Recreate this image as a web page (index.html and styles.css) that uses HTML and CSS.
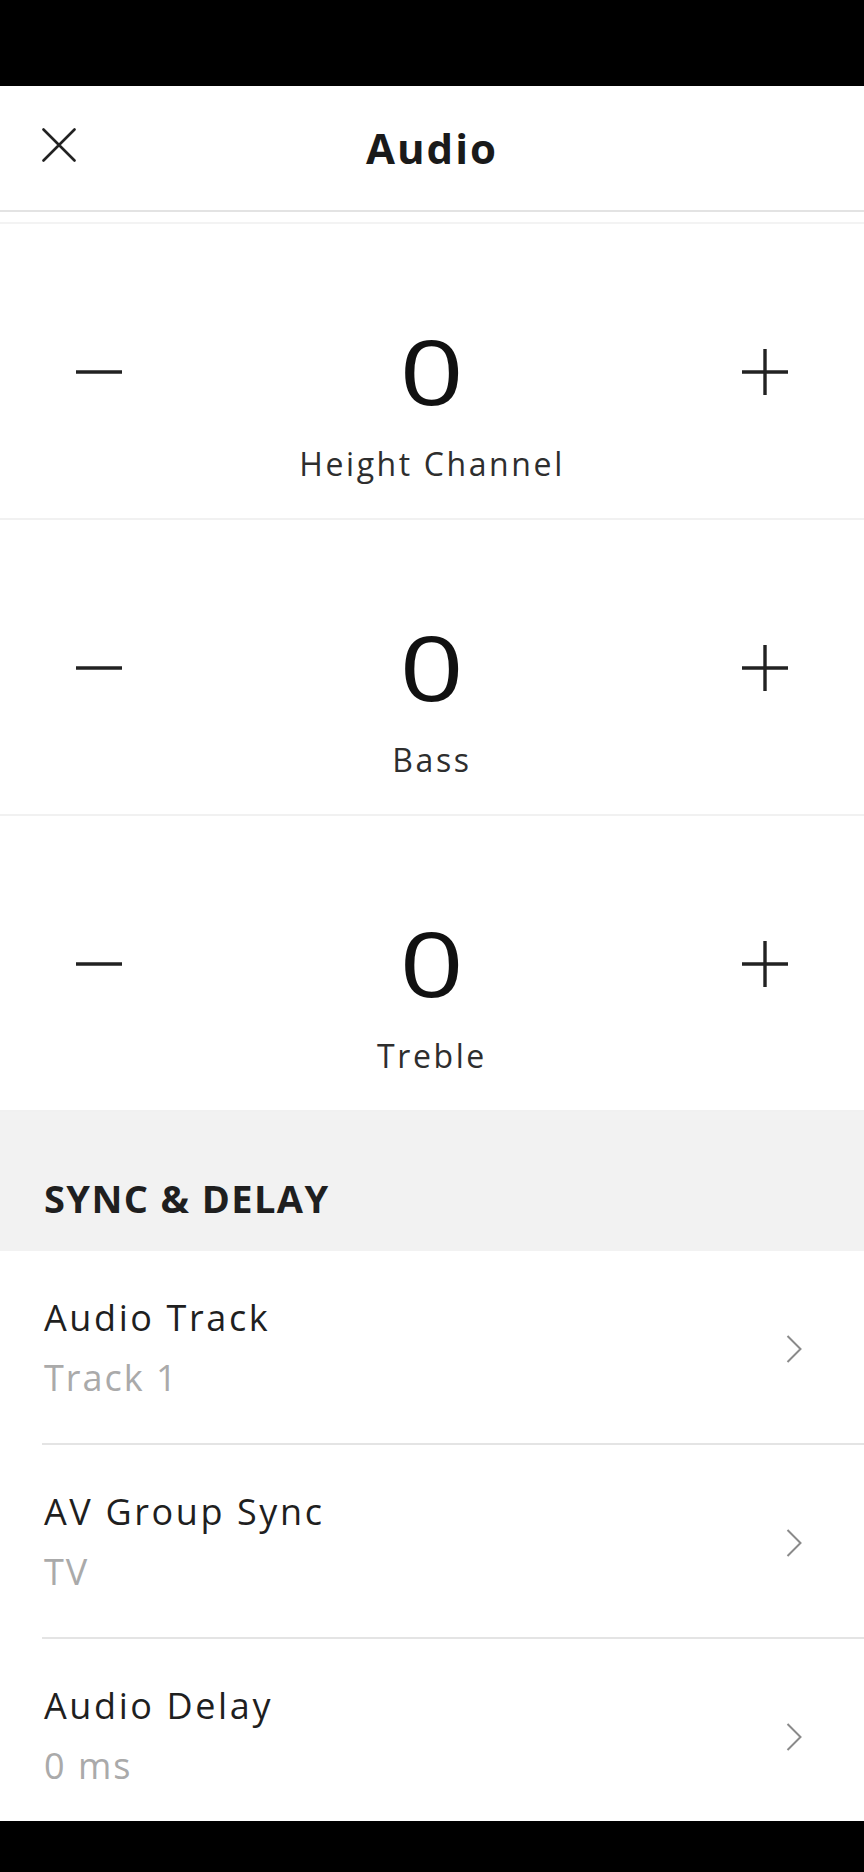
FILE: index.html
```html
<!DOCTYPE html>
<html>

<head>
    <title>Audio</title>
    <link rel="stylesheet" href="styles.css">
</head>

<body>
    <div class="screen">
        <div class="status-bar"></div>

        <div class="header">
            <button class="close-btn" aria-label="Close">
                <svg width="34" height="34" viewBox="0 0 34 34">
                    <path d="M1.5 1.5 L32.5 32.5 M32.5 1.5 L1.5 32.5" stroke="#222" stroke-width="2.6" stroke-linecap="round" fill="none" />
                </svg>
            </button>
            <h1 class="title">Audio</h1>
            <div></div>
        </div>

        <div class="content">
            <div class="scroll-edge"></div>

            <!-- tone controls -->
            <div class="stepper">
                <div class="stepper-controls">
                    <button class="step-btn" aria-label="Decrease">
                        <svg width="46" height="46" viewBox="0 0 46 46"><path d="M0 23 H46" stroke="#222" stroke-width="3.4" fill="none" /></svg>
                    </button>
                    <div class="stepper-value">0</div>
                    <button class="step-btn" aria-label="Increase">
                        <svg width="46" height="46" viewBox="0 0 46 46"><path d="M0 23 H46 M23 0 V46" stroke="#222" stroke-width="3.4" fill="none" /></svg>
                    </button>
                </div>
                <div class="stepper-label">Height Channel</div>
            </div>

            <div class="stepper">
                <div class="stepper-controls">
                    <button class="step-btn" aria-label="Decrease">
                        <svg width="46" height="46" viewBox="0 0 46 46"><path d="M0 23 H46" stroke="#222" stroke-width="3.4" fill="none" /></svg>
                    </button>
                    <div class="stepper-value">0</div>
                    <button class="step-btn" aria-label="Increase">
                        <svg width="46" height="46" viewBox="0 0 46 46"><path d="M0 23 H46 M23 0 V46" stroke="#222" stroke-width="3.4" fill="none" /></svg>
                    </button>
                </div>
                <div class="stepper-label">Bass</div>
            </div>

            <div class="stepper">
                <div class="stepper-controls">
                    <button class="step-btn" aria-label="Decrease">
                        <svg width="46" height="46" viewBox="0 0 46 46"><path d="M0 23 H46" stroke="#222" stroke-width="3.4" fill="none" /></svg>
                    </button>
                    <div class="stepper-value">0</div>
                    <button class="step-btn" aria-label="Increase">
                        <svg width="46" height="46" viewBox="0 0 46 46"><path d="M0 23 H46 M23 0 V46" stroke="#222" stroke-width="3.4" fill="none" /></svg>
                    </button>
                </div>
                <div class="stepper-label">Treble</div>
            </div>

            <!-- sync section -->
            <div class="section-header">SYNC &amp; DELAY</div>

            <div class="list-item">
                <div class="item-text">
                    <div class="item-title">Audio Track</div>
                    <div class="item-value">Track 1</div>
                </div>
                <svg class="chevron" width="16" height="28" viewBox="0 0 16 28"><path d="M1.5 1 L14.5 14 L1.5 27" stroke="#8a8a8a" stroke-width="2" fill="none" /></svg>
            </div>

            <div class="list-item">
                <div class="item-text">
                    <div class="item-title">AV Group Sync</div>
                    <div class="item-value">TV</div>
                </div>
                <svg class="chevron" width="16" height="28" viewBox="0 0 16 28"><path d="M1.5 1 L14.5 14 L1.5 27" stroke="#8a8a8a" stroke-width="2" fill="none" /></svg>
            </div>

            <div class="list-item">
                <div class="item-text">
                    <div class="item-title">Audio Delay</div>
                    <div class="item-value">0 ms</div>
                </div>
                <svg class="chevron" width="16" height="28" viewBox="0 0 16 28"><path d="M1.5 1 L14.5 14 L1.5 27" stroke="#8a8a8a" stroke-width="2" fill="none" /></svg>
            </div>
        </div>

        <div class="nav-bar"></div>
    </div>
</body>

</html>
```

FILE: styles.css
```css
/* Page base */
body {
    margin: 0;
    font-family: "Open Sans", "Liberation Sans", Arial, sans-serif;
    color: #1f1f1f;
    background: #000;
}

button {
    background: none;
    border: none;
    padding: 0;
    cursor: pointer;
}

button svg {
    display: block;
}

.screen {
    width: 864px;
    height: 1872px;
    display: flex;
    flex-direction: column;
    background: #fff;
}

/* System bars */
.status-bar {
    height: 86px;
    background: #000;
    flex-shrink: 0;
}

.nav-bar {
    height: 51px;
    background: #000;
    flex-shrink: 0;
}

/* Top header */
.header {
    height: 124px;
    display: grid;
    grid-template-columns: 1fr auto 1fr;
    align-items: center;
    border-bottom: 2px solid #e3e3e3;
    flex-shrink: 0;
}

.close-btn {
    justify-self: start;
    margin-left: 42px;
    margin-bottom: 6px;
}

.title {
    margin: 0;
    font-size: 42px;
    font-weight: 700;
    letter-spacing: 2px;
    line-height: 1.2;
    color: #1a1a1a;
}

/* Scrolling area */
.content {
    flex: 1;
    overflow: hidden;
}

.scroll-edge {
    height: 10px;
    border-bottom: 2px solid #f3f3f3;
}

/* Stepper rows */
.stepper {
    height: 296px;
    box-sizing: border-box;
    padding-top: 103px;
    border-bottom: 2px solid #f1f1f1;
}

.stepper:last-of-type {
    height: 295px;
    border-bottom: none;
}

.stepper-controls {
    height: 90px;
    display: flex;
    align-items: center;
    justify-content: space-between;
    padding: 0 76px;
}

.stepper-value {
    font-size: 90px;
    line-height: 90px;
    font-weight: 400;
    color: #111;
    transform: scaleX(1.25);
    margin-top: -4px;
}

.stepper-label {
    margin-top: 27px;
    text-align: center;
    font-size: 32px;
    line-height: 40px;
    letter-spacing: 2.6px;
    color: #2e2e2e;
}

/* Section header */
.section-header {
    height: 139px;
    box-sizing: border-box;
    padding: 64px 44px 0;
    background: #f2f2f2;
    font-size: 38px;
    line-height: 1.2;
    font-weight: 700;
    letter-spacing: 1.4px;
    color: #1f1f1f;
}

/* List rows */
.list-item {
    margin-left: 42px;
    padding: 37px 62px 35px 2px;
    display: flex;
    align-items: center;
    justify-content: space-between;
    border-bottom: 2px solid #e4e4e4;
}

.item-title,
.item-value {
    font-size: 36px;
    line-height: 60px;
    letter-spacing: 2.6px;
}

.item-title {
    color: #1f1f1f;
}

.item-value {
    color: #aaaaaa;
    letter-spacing: 2px;
}

.chevron {
    display: block;
    margin-top: 2px;
}
```
